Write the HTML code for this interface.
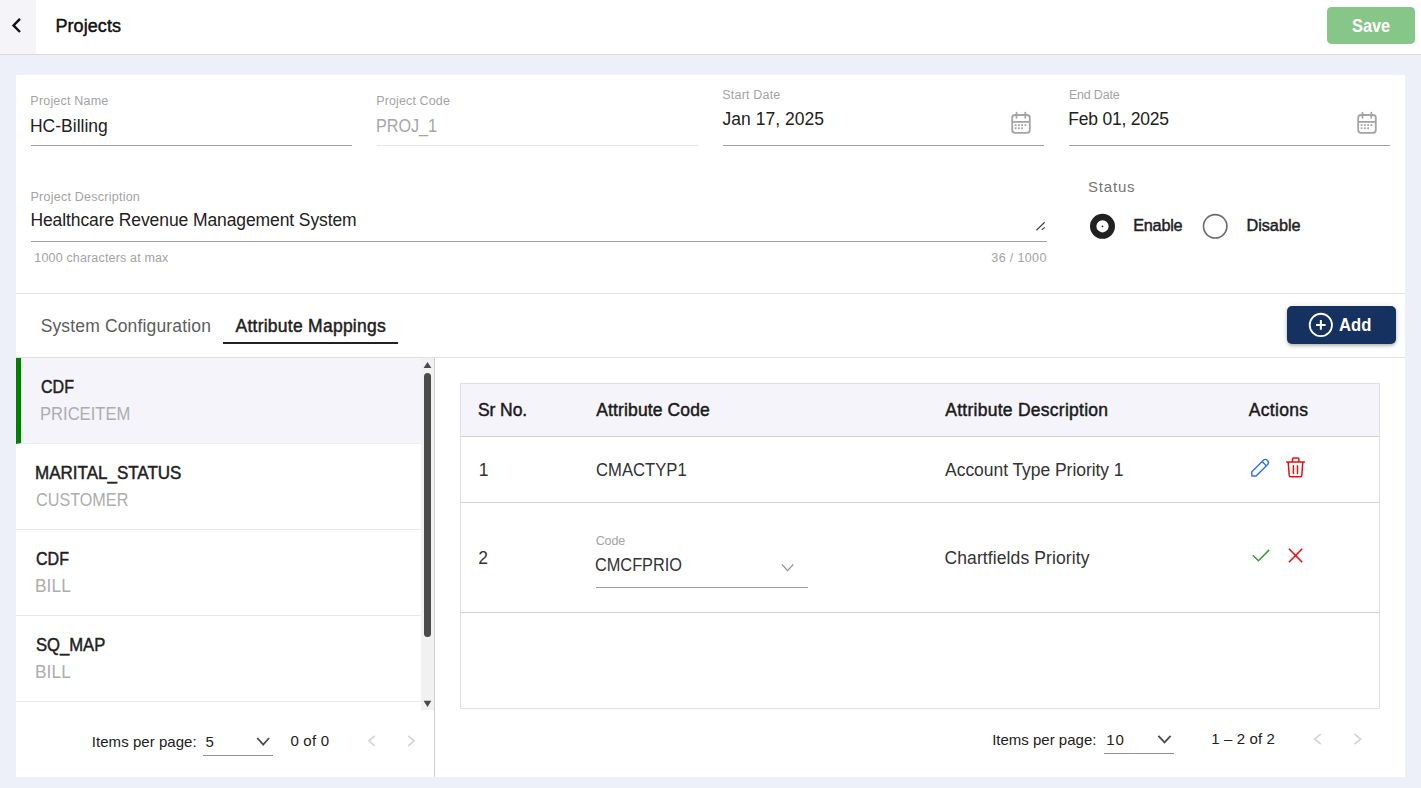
<!DOCTYPE html>
<html><head><meta charset="utf-8">
<style>
*{box-sizing:border-box;margin:0;padding:0}
html,body{width:1421px;height:788px;overflow:hidden}
body{background:#edf0f9;font-family:"Liberation Sans",sans-serif;color:#212121;position:relative}
.abs{position:absolute;white-space:nowrap}
.med{-webkit-text-stroke:0.45px currentColor}
.bold{font-weight:bold}
.lbl{color:#a3a3a3}
.li2{color:#adadad}
.td{color:#333}
.ul{height:1px;background:#a0a0a0}
.hr{height:1px;background:#e0e0e0}
</style></head><body>

<div class="abs" style="left:0;top:0;width:1421px;height:55px;background:#fff;border-bottom:1px solid #dadade"></div>
<div class="abs" style="left:0;top:0;width:36px;height:54px;background:#f4f4f9"></div>
<svg class="abs" style="left:0;top:0" width="36" height="54" viewBox="0 0 36 54"><path d="M20 18.8L13.5 25.4L20 32" fill="none" stroke="#111" stroke-width="2.4"/></svg>
<div class="abs" style="left:1327px;top:7px;width:88px;height:37px;background:#86c688;border-radius:4.5px"></div>
<div class="abs" style="left:16px;top:75px;width:1389px;height:702px;background:#fff"></div>

<!-- underlines -->
<div class="abs ul" style="left:31px;top:145px;width:321px"></div>
<div class="abs ul" style="left:377px;top:145px;width:321px;background:#e6e6e6"></div>
<div class="abs ul" style="left:723px;top:145px;width:321px"></div>
<div class="abs ul" style="left:1069px;top:145px;width:321px"></div>
<div class="abs ul" style="left:31px;top:241px;width:1016px"></div>

<svg class="abs" style="left:1000px;top:105px" width="40" height="35" viewBox="0 0 40 35"><g fill="none" stroke="#a4a4a4" stroke-width="1.8"><rect x="12.2" y="10" width="17.6" height="17.8" rx="2.7"/><path d="M12.2 16.9H29.8"/><path stroke-linecap="round" d="M16.5 7.6V12.8M25.3 7.6V12.8"/></g><g fill="#a4a4a4"><rect x="14.7" y="19.2" width="1.8" height="1.8"/><rect x="18" y="19.2" width="1.8" height="1.8"/><rect x="21.2" y="19.2" width="1.8" height="1.8"/><rect x="24.5" y="19.2" width="1.8" height="1.8"/><rect x="14.7" y="22.3" width="1.8" height="1.8"/><rect x="18" y="22.3" width="1.8" height="1.8"/><rect x="21.2" y="22.3" width="1.8" height="1.8"/></g></svg>
<svg class="abs" style="left:1346px;top:105px" width="40" height="35" viewBox="0 0 40 35"><g fill="none" stroke="#a4a4a4" stroke-width="1.8"><rect x="12.2" y="10" width="17.6" height="17.8" rx="2.7"/><path d="M12.2 16.9H29.8"/><path stroke-linecap="round" d="M16.5 7.6V12.8M25.3 7.6V12.8"/></g><g fill="#a4a4a4"><rect x="14.7" y="19.2" width="1.8" height="1.8"/><rect x="18" y="19.2" width="1.8" height="1.8"/><rect x="21.2" y="19.2" width="1.8" height="1.8"/><rect x="24.5" y="19.2" width="1.8" height="1.8"/><rect x="14.7" y="22.3" width="1.8" height="1.8"/><rect x="18" y="22.3" width="1.8" height="1.8"/><rect x="21.2" y="22.3" width="1.8" height="1.8"/></g></svg>

<!-- resize grip -->
<svg class="abs" style="left:1030px;top:215px" width="20" height="20" viewBox="1030 215 20 20"><path d="M1036.4 230.2L1044.7 222.3M1041.8 229.8L1044.7 227.4" stroke="#444" stroke-width="1.2" fill="none"/></svg>

<!-- radios -->
<svg class="abs" style="left:1085px;top:209px" width="150" height="35" viewBox="1085 209 150 35"><circle cx="1102.5" cy="226.3" r="9.3" fill="#fff" stroke="#212121" stroke-width="6.4"/><circle cx="1102.5" cy="226.3" r="0.9" fill="#212121"/><circle cx="1215.2" cy="226.3" r="11.7" fill="#fff" stroke="#6a6a6a" stroke-width="1.6"/></svg>

<div class="abs hr" style="left:16px;top:293px;width:1389px"></div>
<div class="abs hr" style="left:16px;top:357px;width:1389px"></div>
<div class="abs" style="left:223px;top:342px;width:175px;height:2px;background:#212121"></div>

<!-- add button -->
<div class="abs" style="left:1287px;top:306px;width:109px;height:38px;background:#15315f;border-radius:5px;box-shadow:0 2px 3px rgba(0,0,0,.2),0 1px 6px rgba(0,0,0,.14)"></div>
<svg class="abs" style="left:1305px;top:309px" width="32" height="32" viewBox="1305 309 32 32"><circle cx="1320.85" cy="324.9" r="11.15" fill="none" stroke="#fff" stroke-width="1.8"/><path d="M1320.85 320.1V329.7M1316.05 324.9H1325.65" stroke="#fff" stroke-width="2"/></svg>

<!-- left list -->
<div class="abs" style="left:16px;top:358px;width:405px;height:86px;background:#f4f4fa;border-left:5px solid #008000;border-bottom:1px solid #ececec"></div>
<div class="abs hr" style="left:16px;top:529px;width:405px;background:#e8e8e8"></div>
<div class="abs hr" style="left:16px;top:615px;width:405px;background:#e8e8e8"></div>
<div class="abs hr" style="left:16px;top:701px;width:405px;background:#e8e8e8"></div>

<!-- scrollbar -->
<div class="abs" style="left:421px;top:358px;width:13px;height:352px;background:#f1f1f1"></div>
<div class="abs" style="left:424px;top:373px;width:7px;height:264px;background:#4a4a4a;border-radius:3.5px"></div>
<svg class="abs" style="left:421px;top:358px" width="13" height="352" viewBox="421 358 13 352"><path d="M423.6 367.9L427.5 361.9L431.4 367.9Z M423.6 700.8L427.5 707.1L431.4 700.8Z" fill="#4a4a4a"/></svg>
<div class="abs" style="left:434px;top:358px;width:1px;height:419px;background:#cfcfcf"></div>

<!-- left paginator -->
<svg class="abs" style="left:250px;top:730px" width="30" height="24" viewBox="250 730 30 24"><path d="M257.3 738L263.2 744.6L269.1 738" fill="none" stroke="#4c4c4c" stroke-width="1.8"/></svg>
<div class="abs ul" style="left:203px;top:755px;width:70px;background:#8f8f8f"></div>
<svg class="abs" style="left:360px;top:730px" width="64" height="24" viewBox="360 730 64 24"><path d="M374.8 735.8L368.8 740.85L374.8 745.9M408.2 735.8L414.2 740.85L408.2 745.9" fill="none" stroke="#d2d2d2" stroke-width="1.6"/></svg>

<!-- table -->
<div class="abs" style="left:460px;top:383px;width:920px;height:326px;border:1px solid #e0e0e0"></div>
<div class="abs" style="left:461px;top:384px;width:918px;height:52px;background:#f4f4fa"></div>
<div class="abs hr" style="left:461px;top:436px;width:918px;background:#d2d2d2"></div>
<div class="abs hr" style="left:461px;top:502px;width:918px;background:#d2d2d2"></div>
<div class="abs hr" style="left:461px;top:612px;width:918px;background:#d2d2d2"></div>
<svg class="abs" style="left:775px;top:558px" width="24" height="20" viewBox="775 558 24 20"><path d="M781.9 564.4L787.6 570.6L793.3 564.4" fill="none" stroke="#8a8a8a" stroke-width="1.2"/></svg>
<div class="abs ul" style="left:596px;top:587px;width:212px"></div>

<!-- action icons -->
<svg class="abs" style="left:1245px;top:452px" width="70" height="30" viewBox="1245 452 70 30"><g fill="none" stroke="#2b74e8" stroke-width="1.4" stroke-linejoin="round"><path d="M1251.8 476L1251.8 471.7L1263.15 460.45A3.04 3.04 0 0 1 1267.45 464.75L1256.1 476Z"/><path d="M1262 461.5L1266.3 465.8"/></g><g fill="none" stroke="#e50f0f" stroke-width="1.5" stroke-linecap="round" stroke-linejoin="round"><path d="M1286.6 462.1H1304.4M1292.4 462.1V459.4a1.4 1.4 0 0 1 1.4-1.4h3.7a1.4 1.4 0 0 1 1.4 1.4V462.1M1288.2 462.1l1 13.1a1.6 1.6 0 0 0 1.6 1.5h9.4a1.6 1.6 0 0 0 1.6-1.5l1-13.1M1293.4 465.8V473.4M1297.5 465.8V473.4"/></g></svg>
<svg class="abs" style="left:1245px;top:540px" width="70" height="30" viewBox="1245 540 70 30"><path d="M1252.8 555.2L1258.5 560.8L1269.2 549.9" fill="none" stroke="#2ca02c" stroke-width="1.5"/><path d="M1288.9 548.7L1302.2 562.2M1302.2 548.7L1288.9 562.2" fill="none" stroke="#e81010" stroke-width="1.6"/></svg>

<!-- right paginator -->
<svg class="abs" style="left:1150px;top:728px" width="30" height="24" viewBox="1150 728 30 24"><path d="M1158.4 735.8L1164.5 742.4L1170.6 735.8" fill="none" stroke="#4c4c4c" stroke-width="1.8"/></svg>
<div class="abs ul" style="left:1104px;top:753px;width:70px;background:#8f8f8f"></div>
<svg class="abs" style="left:1305px;top:728px" width="64" height="24" viewBox="1305 728 64 24"><path d="M1320.8 734.1L1314.6 739.1L1320.8 744.1M1354.5 734.1L1360.7 739.1L1354.5 744.1" fill="none" stroke="#d2d2d2" stroke-width="1.6"/></svg>

<div id="t0" class="abs med" style="left:55.44px;top:16px;font-size:18px;line-height:20px;letter-spacing:0.071px;color:#111">Projects</div>
<div id="t1" class="abs bold" style="left:1351.69px;top:16px;font-size:17.5px;line-height:20px;letter-spacing:0.000px;color:#fff;transform-origin:0 50%;transform:scaleX(0.9331);">Save</div>
<div id="t2" class="abs lbl" style="left:30.35px;top:94px;font-size:12.5px;line-height:14px;letter-spacing:0.199px;">Project Name</div>
<div id="t3" class="abs val" style="left:29.96px;top:116px;font-size:17.5px;line-height:20px;letter-spacing:0.009px;">HC-Billing</div>
<div id="t4" class="abs lbl" style="left:376.18px;top:94px;font-size:12.5px;line-height:14px;letter-spacing:0.131px;">Project Code</div>
<div id="t5" class="abs val" style="left:375.62px;top:116px;font-size:17.5px;line-height:20px;letter-spacing:0.000px;color:#a6a6a6;transform-origin:0 50%;transform:scaleX(0.9239);">PROJ_1</div>
<div id="t6" class="abs lbl" style="left:722.32px;top:88px;font-size:12.5px;line-height:14px;letter-spacing:0.188px;">Start Date</div>
<div id="t7" class="abs val" style="left:722.61px;top:109px;font-size:17.5px;line-height:20px;letter-spacing:0.013px;">Jan 17, 2025</div>
<div id="t8" class="abs lbl" style="left:1068.90px;top:88px;font-size:12.5px;line-height:14px;letter-spacing:-0.186px;">End Date</div>
<div id="t9" class="abs val" style="left:1068.26px;top:109px;font-size:17.5px;line-height:20px;letter-spacing:-0.210px;">Feb 01, 2025</div>
<div id="t10" class="abs lbl" style="left:30.49px;top:190px;font-size:12.5px;line-height:14px;letter-spacing:0.246px;">Project Description</div>
<div id="t11" class="abs val" style="left:30.40px;top:210px;font-size:17.5px;line-height:20px;letter-spacing:-0.099px;">Healthcare Revenue Management System</div>
<div id="t12" class="abs lbl" style="left:34.34px;top:251px;font-size:12.5px;line-height:14px;letter-spacing:0.161px;">1000 characters at max</div>
<div id="t13" class="abs lbl" style="left:991.33px;top:251px;font-size:12.5px;line-height:14px;letter-spacing:0.361px;">36 / 1000</div>
<div id="t14" class="abs " style="left:1088.06px;top:178px;font-size:15px;line-height:17px;letter-spacing:0.793px;color:#757575">Status</div>
<div id="t15" class="abs med" style="left:1133.25px;top:216px;font-size:16.25px;line-height:18px;letter-spacing:-0.261px;">Enable</div>
<div id="t16" class="abs med" style="left:1246.46px;top:216px;font-size:16.25px;line-height:18px;letter-spacing:-0.017px;">Disable</div>
<div id="t17" class="abs " style="left:40.65px;top:316px;font-size:17.5px;line-height:20px;letter-spacing:0.156px;color:#5c5c5c">System Configuration</div>
<div id="t18" class="abs med" style="left:235.49px;top:316px;font-size:17.5px;line-height:20px;letter-spacing:0.255px;">Attribute Mappings</div>
<div id="t19" class="abs bold" style="left:1338.52px;top:315px;font-size:17.5px;line-height:20px;letter-spacing:0.000px;color:#fff;transform-origin:0 50%;transform:scaleX(0.9510);">Add</div>
<div id="t20" class="abs med" style="left:40.58px;top:377px;font-size:17.5px;line-height:20px;letter-spacing:0.000px;;transform-origin:0 50%;transform:scaleX(0.9159);">CDF</div>
<div id="t21" class="abs li2" style="left:39.65px;top:404px;font-size:17.5px;line-height:20px;letter-spacing:0.000px;;transform-origin:0 50%;transform:scaleX(0.9477);">PRICEITEM</div>
<div id="t22" class="abs med" style="left:34.79px;top:463px;font-size:17.5px;line-height:20px;letter-spacing:0.000px;;transform-origin:0 50%;transform:scaleX(0.9715);">MARITAL_STATUS</div>
<div id="t23" class="abs li2" style="left:35.65px;top:490px;font-size:17.5px;line-height:20px;letter-spacing:0.000px;;transform-origin:0 50%;transform:scaleX(0.9251);">CUSTOMER</div>
<div id="t24" class="abs med" style="left:35.51px;top:549px;font-size:17.5px;line-height:20px;letter-spacing:0.000px;;transform-origin:0 50%;transform:scaleX(0.9161);">CDF</div>
<div id="t25" class="abs li2" style="left:34.52px;top:576px;font-size:17.5px;line-height:20px;letter-spacing:0.000px;;transform-origin:0 50%;transform:scaleX(0.9946);">BILL</div>
<div id="t26" class="abs med" style="left:35.50px;top:635px;font-size:17.5px;line-height:20px;letter-spacing:0.000px;;transform-origin:0 50%;transform:scaleX(0.9499);">SQ_MAP</div>
<div id="t27" class="abs li2" style="left:34.52px;top:662px;font-size:17.5px;line-height:20px;letter-spacing:0.000px;;transform-origin:0 50%;transform:scaleX(0.9946);">BILL</div>
<div id="t28" class="abs " style="left:91.81px;top:733px;font-size:15px;line-height:17px;letter-spacing:0.041px;">Items per page:</div>
<div id="t29" class="abs " style="left:205.56px;top:733px;font-size:15px;line-height:17px;letter-spacing:0.000px;">5</div>
<div id="t30" class="abs " style="left:290.47px;top:732px;font-size:15px;line-height:17px;letter-spacing:0.195px;">0 of 0</div>
<div id="t31" class="abs med" style="left:477.88px;top:400px;font-size:17.5px;line-height:20px;letter-spacing:-0.055px;color:#1a1a1a">Sr No.</div>
<div id="t32" class="abs med" style="left:596.32px;top:400px;font-size:17.5px;line-height:20px;letter-spacing:0.120px;color:#1a1a1a">Attribute Code</div>
<div id="t33" class="abs med" style="left:945.32px;top:400px;font-size:17.5px;line-height:20px;letter-spacing:0.258px;color:#1a1a1a">Attribute Description</div>
<div id="t34" class="abs med" style="left:1248.82px;top:400px;font-size:17.5px;line-height:20px;letter-spacing:0.310px;color:#1a1a1a">Actions</div>
<div id="t35" class="abs td" style="left:478.67px;top:460px;font-size:17.5px;line-height:20px;letter-spacing:0.000px;">1</div>
<div id="t36" class="abs td" style="left:595.66px;top:460px;font-size:17.5px;line-height:20px;letter-spacing:0.000px;;transform-origin:0 50%;transform:scaleX(0.9511);">CMACTYP1</div>
<div id="t37" class="abs td" style="left:945.07px;top:460px;font-size:17.5px;line-height:20px;letter-spacing:-0.050px;">Account Type Priority 1</div>
<div id="t38" class="abs td" style="left:478.35px;top:548px;font-size:17.5px;line-height:20px;letter-spacing:0.000px;">2</div>
<div id="t39" class="abs lbl" style="left:595.73px;top:534px;font-size:12.5px;line-height:14px;letter-spacing:-0.158px;">Code</div>
<div id="t40" class="abs td" style="left:594.73px;top:555px;font-size:17.5px;line-height:20px;letter-spacing:0.000px;;transform-origin:0 50%;transform:scaleX(0.9322);">CMCFPRIO</div>
<div id="t41" class="abs td" style="left:944.47px;top:548px;font-size:17.5px;line-height:20px;letter-spacing:0.106px;">Chartfields Priority</div>
<div id="t42" class="abs " style="left:992.14px;top:731px;font-size:15px;line-height:17px;letter-spacing:0.006px;">Items per page:</div>
<div id="t43" class="abs " style="left:1106.22px;top:731px;font-size:15px;line-height:17px;letter-spacing:0.860px;">10</div>
<div id="t44" class="abs " style="left:1211.26px;top:730px;font-size:15px;line-height:17px;letter-spacing:0.128px;">1 – 2 of 2</div>
</body></html>
